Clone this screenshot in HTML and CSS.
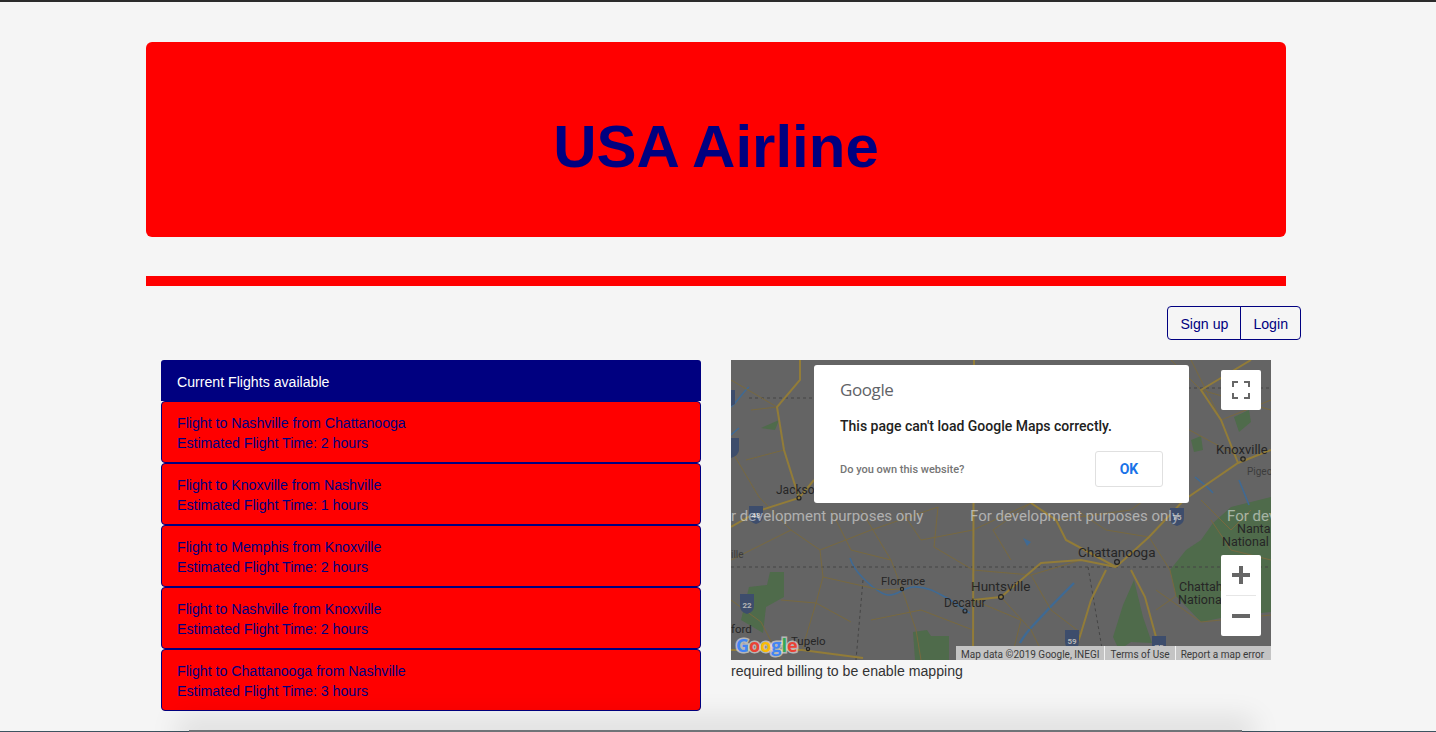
FILE: index.html
```html
<!DOCTYPE html>
<html lang="en">
<head>
  <meta charset="UTF-8">
  <title>USA Airline</title>
  <link rel="stylesheet" href="styles.css">
</head>
<body>
  <div class="container">
    <div class="banner">
      <h1>USA Airline</h1>
    </div>
    <div class="divider"></div>

    <div class="auth">
      <a class="auth-btn" href="#">Sign up</a>
      <a class="auth-btn" href="#">Login</a>
    </div>

    <div class="columns">
      <div class="flights">
        <div class="flights-head">Current Flights available</div>
        <div class="flight">Flight to Nashville from Chattanooga<br>Estimated Flight Time: 2 hours</div>
        <div class="flight">Flight to Knoxville from Nashville<br>Estimated Flight Time: 1 hours</div>
        <div class="flight">Flight to Memphis from Knoxville<br>Estimated Flight Time: 2 hours</div>
        <div class="flight">Flight to Nashville from Knoxville<br>Estimated Flight Time: 2 hours</div>
        <div class="flight">Flight to Chattanooga from Nashville<br>Estimated Flight Time: 3 hours</div>
      </div>

      <div class="map-col">
        <div class="map">
          <svg class="map-canvas" width="540" height="300" viewBox="0 0 540 300">
            <rect width="540" height="300" fill="#646464"/>
            <!-- parks -->
            <g fill="#4f6b4b">
              <path d="M39 212 L53 212 L53 237 L35 247 L32 273 L10 260 L18 227 L36 225Z"/>
              <path d="M182 272 L196 270 L200 276 L218 276 L218 300 L184 300Z"/>
              <path d="M482 163 L500 147 L540 137 L540 252 L500 256 L470 262 L445 236 L439 210 L455 190 L470 180Z"/>
              <path d="M382 277 L392 245 L403 220 L412 257 L421 283 L400 282 L388 290Z"/>
              <path d="M503 57 L518 50 L520 62 L508 72Z"/>
              <path d="M460 80 L470 76 L472 90 L463 92Z"/>
              <path d="M30 68 L48 60 L44 70Z"/>
            </g>
            <!-- water -->
            <g fill="none" stroke="#3f6a94" stroke-width="1.6">
              <path d="M119 198 C122 208 128 214 132 218 C140 226 150 234 157 235 C165 236 172 228 182 227 C195 226 205 232 214 237 C224 242 232 250 239 253"/>
              <path d="M0 47 C6 42 12 32 18 27"/>
              <path d="M482 133 C476 126 470 122 464 117"/>
              <path d="M0 75 L8 68"/>
              <path d="M508 120 L518 145"/>
            </g>
            <path d="M289 283 C296 270 304 264 310 257 C322 244 334 232 343 223" fill="none" stroke="#3f6a94" stroke-width="2.4"/>
            <path d="M292 178 L300 182 L296 186Z" fill="#3f6a94"/>
            <!-- borders -->
            <g fill="none" stroke="#454545" stroke-width="1" stroke-dasharray="3 3">
              <path d="M0 207 L540 207"/>
              <path d="M18 38 L82 38"/>
              <path d="M132 220 L125 300"/>
              <path d="M357 207 L373 300"/>
              <path d="M457 28 L540 28"/>
            </g>
            <!-- minor roads -->
            <g fill="none" stroke="#78693f" stroke-width="1">
              <path d="M0 90 L28 137 L60 170 L89 190 L92 217 L85 243 L71 290"/>
              <path d="M89 190 L140 170 L207 147"/>
              <path d="M207 147 L203 187 L242 210"/>
              <path d="M92 217 L150 230 L171 229"/>
              <path d="M171 229 L185 270 L190 300"/>
              <path d="M242 170 L300 143"/>
              <path d="M242 210 L300 215 L350 200"/>
              <path d="M270 237 L300 270 L315 300"/>
              <path d="M0 200 L60 170"/>
              <path d="M453 140 L440 60 L512 99"/>
              <path d="M480 160 L500 190 L540 200"/>
              <path d="M325 160 L400 150 L440 120"/>
              <path d="M425 230 L470 262 L540 255"/>
              <path d="M130 150 L160 200 L171 229"/>
              <path d="M0 240 L30 262 L50 300"/>
              <path d="M440 0 L470 30 L540 50"/>
              <path d="M280 300 L290 260 L242 240"/>
              <path d="M100 150 L120 190 L160 200"/>
              <path d="M170 150 L190 180 L242 170"/>
              <path d="M280 200 L262 170 L300 143"/>
              <path d="M300 215 L320 250 L350 273"/>
              <path d="M140 260 L190 250 L242 270"/>
              <path d="M50 240 L85 243 L120 262"/>
              <path d="M345 150 L375 170 L418 177"/>
              <path d="M425 250 L445 236 L439 210 L418 177"/>
              <path d="M470 140 L500 170 L520 150"/>
              <path d="M20 50 L46 47 L0 20"/>
              <path d="M15 100 L53 90"/>
              <path d="M460 0 L490 60 L540 40"/>
            </g>
            <!-- highways -->
            <g fill="none" stroke="#927c38" stroke-width="2">
              <path d="M243 0 L242 300"/>
              <path d="M69 0 L69 20 L46 47 L53 90 L68 138"/>
              <path d="M0 167 L30 150 L68 138 L83 120"/>
              <path d="M385 207 L418 177 L453 140 L507 103 L540 90"/>
              <path d="M375 210 L360 240 L350 273 L341 300"/>
              <path d="M400 210 L414 237 L425 277 L426 300"/>
              <path d="M385 207 L335 180 L325 160 L300 143"/>
              <path d="M242 240 L270 237 L310 203 L350 200 L385 207"/>
              <path d="M71 290 L132 298"/>
              <path d="M507 103 L490 60 L470 30 L520 0"/>
              <path d="M0 290 L71 290"/>
            </g>
            <!-- interstate shields -->
            <g class="shield-text">
              <path d="M18 146 H32 V156 Q32 162 25 164 Q18 162 18 156Z" fill="#3d4d6c"/>
              <text x="25" y="158">48</text>
              <path d="M9 234 H23 V246 Q23 252 16 254 Q9 252 9 246Z" fill="#3d4d6c"/>
              <text x="16" y="248">22</text>
              <path d="M334 270 H348 V282 Q348 288 341 290 Q334 288 334 282Z" fill="#3d4d6c"/>
              <text x="341" y="284">59</text>
              <path d="M421 276 H435 V288 Q435 294 428 296 Q421 294 421 288Z" fill="#3d4d6c"/>
              <text x="428" y="290">75</text>
              <path d="M439 148 H453 V158 Q453 164 446 166 Q439 164 439 158Z" fill="#3d4d6c"/>
              <text x="446" y="160">75</text>
              <path d="M0 78 H8 V90 Q8 95 0 98Z" fill="#3d4d6c"/>
              <path d="M0 30 H4 V44 L0 46Z" fill="#3d4d6c"/>
            </g>
            <!-- city dots -->
            <g fill="none" stroke="#222222" stroke-width="1.2">
              <circle cx="68" cy="138" r="2"/>
              <circle cx="512" cy="99" r="2.2"/>
              <circle cx="386" cy="202" r="2.4"/>
              <circle cx="270" cy="237" r="2.4"/>
              <circle cx="234" cy="251" r="2"/>
              <circle cx="171" cy="229" r="1.6"/>
              <circle cx="77" cy="289" r="1.6"/>
            </g>
            <!-- place names -->
            <g class="place">
              <text x="45" y="134" font-size="12">Jackso</text>
              <text x="485" y="94" font-size="13">Knoxville</text>
              <text x="516" y="115" font-size="10" class="place-dim">Pigeo</text>
              <text x="347" y="197" font-size="13.5">Chattanooga</text>
              <text x="240" y="231" font-size="13.5">Huntsville</text>
              <text x="213" y="247" font-size="12">Decatur</text>
              <text x="150" y="225" font-size="11.5">Florence</text>
              <text x="60" y="285" font-size="11.5">Tupelo</text>
              <text x="0" y="273" font-size="11.5">ford</text>
              <text x="0" y="198" font-size="10" class="place-dim">ille</text>
              <text x="506" y="173" font-size="12.5">Nanta</text>
              <text x="491" y="186" font-size="12.5">National</text>
              <text x="448" y="231" font-size="12.5">Chattah</text>
              <text x="447" y="244" font-size="12.5">Nationa</text>
            </g>
            <!-- watermark -->
            <g class="watermark">
              <text x="0" y="161">r development purposes only</text>
              <text x="239" y="161">For development purposes only</text>
              <text x="496" y="161">For dev</text>
            </g>
            <text class="map-logo" x="5" y="292"><tspan fill="#4285f4">G</tspan><tspan fill="#ea4335">o</tspan><tspan fill="#fbbc05">o</tspan><tspan fill="#4285f4">g</tspan><tspan fill="#34a853">l</tspan><tspan fill="#ea4335">e</tspan></text>
          </svg>

          <div class="map-dialog">
            <div class="dialog-logo">Google</div>
            <div class="dialog-msg">This page can't load Google Maps correctly.</div>
            <div class="dialog-foot">
              <span class="dialog-own">Do you own this website?</span>
              <span class="dialog-ok">OK</span>
            </div>
          </div>

          <div class="map-btn map-full">
            <svg width="18" height="18" viewBox="0 0 18 18" fill="none" stroke="#666666" stroke-width="2">
              <path d="M1 6V1H6M12 1H17V6M17 12V17H12M6 17H1V12"/>
            </svg>
          </div>

          <div class="map-btn map-zoom">
            <div class="zoom-part">
              <svg width="18" height="18" viewBox="0 0 18 18" fill="#666666"><path d="M7 0H11V7H18V11H11V18H7V11H0V7H7Z"/></svg>
            </div>
            <div class="zoom-line"></div>
            <div class="zoom-part">
              <svg width="18" height="18" viewBox="0 0 18 18" fill="#666666"><path d="M0 7H18V11H0Z"/></svg>
            </div>
          </div>

          <div class="map-attrib">
            <span>Map data ©2019 Google, INEGI</span>
            <span>Terms of Use</span>
            <span>Report a map error</span>
          </div>
        </div>
        <p class="map-note">required billing to be enable mapping</p>
      </div>
    </div>
  </div>

  <div class="window-top"></div>
  <div class="window-edge"></div>
  <div class="window-shadow"></div>
</body>
</html>
```

FILE: styles.css
```css
html, body {
  height: 100%;
}
body {
  margin: 0;
  height: 732px;
  overflow: hidden;
  background: #f5f5f5;
  font-family: "Liberation Sans", Arial, sans-serif;
  font-size: 14px;
  color: #212529;
  position: relative;
}
.window-top {
  position: absolute;
  top: 0;
  left: 0;
  right: 0;
  height: 2px;
  background: #2b2b2b;
}
.window-edge {
  position: absolute;
  left: 0;
  right: 0;
  bottom: 0;
  height: 1px;
  background: #3d5360;
}
.window-shadow {
  position: absolute;
  left: 189px;
  right: 194px;
  bottom: 0;
  height: 2px;
  background: #6f7478;
  box-shadow: 0 0 28px 12px rgba(0, 0, 0, 0.1);
}
.container {
  width: 1140px;
  margin-left: 146px;
  padding-top: 42px;
}
.banner {
  height: 195px;
  background: #ff0000;
  border-radius: 6px;
  display: flex;
  align-items: center;
  justify-content: center;
}
.banner h1 {
  margin: 14px 0 0;
  font-size: 60px;
  font-weight: 700;
  color: #000080;
}
.divider {
  height: 10px;
  margin-top: 39px;
  background: #ff0000;
}
.auth {
  display: flex;
  justify-content: flex-end;
  margin: 20px -15px 20px 0;
}
.auth-btn {
  display: block;
  padding: 9px 12px 7px;
  line-height: 16px;
  font-size: 14.15px;
  color: #000080;
  text-decoration: none;
  border: 1px solid #000080;
}
.auth-btn:first-child {
  border-radius: 4px 0 0 4px;
}
.auth-btn:last-child {
  margin-left: -1px;
  border-radius: 0 4px 4px 0;
}
.columns {
  display: flex;
  gap: 30px;
  padding: 0 15px;
}
.flights {
  width: 540px;
  font-size: 14.15px;
  line-height: 20px;
}
.flights-head {
  height: 41px;
  box-sizing: border-box;
  padding: 12px 16px 0;
  background: #000080;
  border-radius: 3px 3px 0 0;
  color: #ffffff;
}
.flight {
  height: 62px;
  box-sizing: border-box;
  padding: 11px 15px 0;
  background: #ff0000;
  color: #000080;
  border: 1px solid #000080;
  border-radius: 4px;
}
.map-col {
  width: 540px;
}
.map {
  position: relative;
  width: 540px;
  height: 300px;
  overflow: hidden;
}
.map-canvas {
  display: block;
}
.place text {
  font-family: Roboto, sans-serif;
  fill: #262626;
}
.place .place-dim {
  fill: #3c3c3c;
}
.watermark text {
  font-family: Roboto, sans-serif;
  font-size: 15px;
  fill: rgba(255, 255, 255, 0.5);
}
.shield-text text {
  font-family: Roboto, sans-serif;
  font-size: 8px;
  font-weight: 700;
  text-anchor: middle;
  fill: #b5b5b5;
}
.map-logo {
  font-family: "Open Sans", sans-serif;
  font-size: 18px;
  font-weight: 700;
  stroke: rgba(255, 255, 255, 0.55);
  stroke-width: 3px;
  paint-order: stroke;
}
.map-dialog {
  position: absolute;
  left: 83px;
  top: 5px;
  width: 375px;
  height: 138px;
  box-sizing: border-box;
  padding: 12px 26px 0;
  background: #ffffff;
  border-radius: 3px;
  font-family: Roboto, sans-serif;
}
.dialog-logo {
  font-family: "Open Sans", sans-serif;
  font-size: 17px;
  line-height: 26px;
  letter-spacing: -0.4px;
  color: #5f6368;
}
.dialog-msg {
  margin-top: 12px;
  font-size: 14px;
  font-weight: 500;
  line-height: 22px;
  color: #212121;
}
.dialog-foot {
  display: flex;
  justify-content: space-between;
  align-items: center;
  margin-top: 14px;
}
.dialog-own {
  font-size: 11px;
  font-weight: 500;
  color: #757575;
}
.dialog-ok {
  width: 68px;
  height: 36px;
  box-sizing: border-box;
  border: 1px solid #e0e0e0;
  border-radius: 3px;
  font-size: 14px;
  font-weight: 700;
  line-height: 34px;
  text-align: center;
  color: #1a73e8;
}
.map-btn {
  position: absolute;
  right: 10px;
  width: 40px;
  background: #ffffff;
  border-radius: 2px;
}
.map-full {
  top: 10px;
  height: 40px;
  display: flex;
  align-items: center;
  justify-content: center;
}
.map-zoom {
  top: 195px;
  height: 81px;
}
.zoom-part {
  height: 40px;
  display: flex;
  align-items: center;
  justify-content: center;
}
.zoom-line {
  height: 1px;
  margin: 0 5px;
  background: #e6e6e6;
}
.map-attrib {
  position: absolute;
  right: 0;
  bottom: 0;
  width: 315px;
  height: 14px;
  box-sizing: border-box;
  display: flex;
  background: #c4c4c4;
  font-family: Roboto, sans-serif;
  font-size: 10px;
  line-height: 17px;
  color: #3a3a3a;
  white-space: nowrap;
}
.map-attrib span {
  padding: 0 5px;
  border-left: 1px solid #f2f2f2;
}
.map-attrib span:first-child {
  border-left: 0;
}
.map-note {
  margin: 3px 0 0;
  font-size: 14.15px;
  line-height: 17px;
  color: #333333;
}
```
